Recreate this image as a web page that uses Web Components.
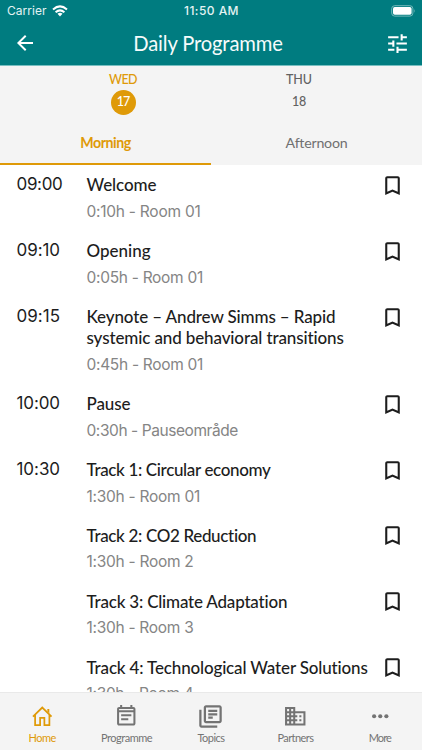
<!DOCTYPE html>
<html lang="en">
<head>
<meta charset="utf-8">
<meta name="viewport" content="width=device-width, initial-scale=1">
<title>Daily Programme</title>
<style>
html,body{margin:0;height:100%;overflow:hidden;background:#fff}
</style>
</head>
<body>
<programme-app></programme-app>
<script>
const define = (name, html, setup) => {
  const template = document.createElement('template');
  template.innerHTML = html;
  customElements.define(name, class extends HTMLElement {
    connectedCallback() {
      if (this.shadowRoot) return;
      this.attachShadow({ mode: 'open' }).append(template.content.cloneNode(true));
      if (setup) setup(this, this.shadowRoot);
    }
  });
};

const icons = {
  back: '<path d="M20 11H7.8l5.6-5.6L12 4l-8 8 8 8 1.4-1.4L7.8 13H20z"/>',
  tune: '<path d="M3 17v2h6v-2H3zM3 5v2h10V5H3zm10 16v-2h8v-2h-8v-2h-2v6h2zM7 9v2H3v2h4v2h2V9H7zm14 4v-2H11v2h10zm-6-4h2V7h4V5h-4V3h-2v6z"/>',
  bookmark: '<path d="M17 3H7c-1.1 0-2 .9-2 2v16l7-3 7 3V5c0-1.1-.9-2-2-2zm0 15-5-2.2L7 18V5h10z"/>',
  home: '<path fill="none" stroke="currentColor" stroke-width="1.7" d="M2.9 12.4 12 3.5l9.1 8.9M5 10.5v10.3h4.9v-7.2h4.2v7.2H19V10.5"/><path d="M17 4.8h1.9v4.3L17 7.3z"/>',
  programme: '<path d="M17 10H7v2h10v-2zm2-7h-1V1h-2v2H8V1H6v2H5c-1.1 0-2 .9-2 2v14c0 1.1.9 2 2 2h14c1.1 0 2-.9 2-2V5c0-1.1-.9-2-2-2zm0 16H5V8h14v11zm0-13H5V5h14v1zm-5 8H7v2h7v-2z"/>',
  topics: '<path d="M4 6H2v14c0 1.1.9 2 2 2h14v-2H4V6zm16-4H8c-1.1 0-2 .9-2 2v12c0 1.1.9 2 2 2h12c1.1 0 2-.9 2-2V4c0-1.1-.9-2-2-2zm0 14H8V4h12v12zM10 9h8v2h-8V9zm0 3h4v2h-4v-2zm0-6h8v2h-8V6z"/>',
  partners: '<path d="M12 7V3H2v18h20V7H12zM6 19H4v-2h2v2zm0-4H4v-2h2v2zm0-4H4V9h2v2zm0-4H4V5h2v2zm4 12H8v-2h2v2zm0-4H8v-2h2v2zm0-4H8V9h2v2zm0-4H8V5h2v2zm10 12h-8v-2h2v-2h-2v-2h2v-2h-2V9h8v10zm-2-8h-2v2h2v-2zm0 4h-2v2h2v-2z"/>',
  more: '<circle cx="6" cy="12" r="2.05"/><circle cx="12" cy="12" r="2.05"/><circle cx="18" cy="12" r="2.05"/>'
};

define('app-icon', `<style>:host{display:block;width:24px;height:24px}svg{display:block;width:100%;height:100%;fill:currentColor}</style><svg viewBox="0 0 24 24"></svg>`,
  (el, root) => { root.querySelector('svg').innerHTML = icons[el.getAttribute('name')]; });

/* A line of text whose tracking is adjusted to a nominal width. */
define('fit-text', `<style>:host{display:block;width:max-content;white-space:nowrap}</style><span><slot></slot></span>`,
  (el, root) => {
    const span = root.querySelector('span');
    const width = span.getBoundingClientRect().width;
    const gap = (Number(el.getAttribute('w')) - width) / el.textContent.length;
    span.style.letterSpacing = gap.toFixed(4) + 'px';
  });

define('status-bar', `<style>
:host{display:grid;grid-template-columns:1fr auto 1fr;align-items:center;height:22px;padding:0 6px 0 7px;font:12px/22px Inter,sans-serif;color:#e4f3f3}
.left{display:flex;align-items:center;gap:5px}.wifi{width:16px;height:12px}.time{font-weight:500}.battery{justify-self:end;width:25px;height:12px}
</style><div class="left"><fit-text w="39.5">Carrier</fit-text><svg class="wifi" viewBox="0 0 16 12" fill="none" stroke="#fff" stroke-width="2"><path d="M1 4.4q7-6 14 0M3.6 7.2q4.4-3.6 8.8 0"/><path fill="#fff" stroke="none" d="M5.5 8.7q2.5-1.8 5 0L8 11.4z"/></svg></div><fit-text class="time" w="55">11:50 AM</fit-text><svg class="battery" viewBox="0 0 25 12"><rect x=".7" y=".7" width="21.2" height="10.4" rx="3" fill="none" stroke="#73b9ba"/><rect x="2" y="2" width="18.6" height="7.8" rx="1.7" fill="#fff"/><path d="M23.2 4q1.4 1.9 0 3.8z" fill="#73b9ba"/></svg>`);

define('title-bar', `<style>
:host{display:grid;grid-template-columns:40px 1fr 47px;align-items:center;height:42px;padding:0 12px 0 13px;color:#fff}
.title{justify-self:center;font:20.2px/42px Lato,sans-serif;color:#f5fbfb}.tune{width:25px;height:25px;justify-self:end}
</style><app-icon name="back"></app-icon><fit-text class="title" w="149.5">Daily Programme</fit-text><app-icon class="tune" name="tune"></app-icon>`);

define('day-tab', `<style>
:host{display:flex;flex-direction:column;align-items:center;width:60px;color:#626262;font:12.5px/16px Lato,sans-serif;padding-top:6px;box-sizing:border-box}
.number{display:grid;place-items:center;width:25px;height:25px;border-radius:50%;margin-top:1.5px}
:host([active]){color:#df9a08}:host([active]) .number{background:#df9a08;color:#fff}
.number,.name{font-weight:500}
</style><div class="name"><slot name="name"></slot></div><div class="number"><slot></slot></div>`);

define('period-tab', `<style>
:host{display:flex;justify-content:center;box-sizing:border-box;height:43px;padding-top:2px;font:14.2px/38px Lato,sans-serif;color:#707070}
:host([active]){color:#df9a08;font-weight:700;border-bottom:2px solid #df9a08}
</style><slot></slot>`);

define('date-header', `<style>
:host{display:block;height:100px;box-sizing:border-box;background:#f4f4f4;border-top:1px solid #78bfc1}.days{display:flex;gap:116px;height:56px;padding-left:93px}.periods{display:grid;grid-template-columns:1fr 1fr}
</style><div class="days"><day-tab active><fit-text slot="name" w="28">WED</fit-text><fit-text w="12.5">17</fit-text></day-tab><day-tab><fit-text slot="name" w="26">THU</fit-text><fit-text w="14">18</fit-text></day-tab></div><div class="periods"><period-tab active><fit-text w="50.5">Morning</fit-text></period-tab><period-tab><fit-text w="61.5">Afternoon</fit-text></period-tab></div>`);

define('session-row', `<style>
:host{display:grid;grid-template-columns:70px 1fr 25px;padding:9.3px 17px 9.1px 16.5px;color:#1d1d1d}
.time{font:17px/21px Inter,sans-serif;padding-top:.2px}.title{font:500 17px/21.2px Lato,sans-serif}.meta{font:15.5px/20px Inter,sans-serif;color:#858585;margin-top:6.3px;height:20px}.mark{width:25px;height:25px;margin-top:-1.5px}
</style><div class="time"><slot name="time"></slot></div><div><div class="title"><slot></slot></div><div class="meta"><slot name="meta"></slot></div></div><app-icon class="mark" name="bookmark"></app-icon>`);

const sessions = [
  ['09:00', 46, [['Welcome', 70]], '0:10h - Room 01', 114],
  ['09:10', 43.5, [['Opening', 64]], '0:05h - Room 01', 116.5],
  ['09:15', 43.5, [['Keynote – Andrew Simms – Rapid', 249], ['systemic and behavioral transitions', 257.5]], '0:45h - Room 01', 116.5],
  ['10:00', 43.5, [['Pause', 44]], '0:30h - Pauseområde', 151.5],
  ['10:30', 43.5, [['Track 1: Circular economy', 184]], '1:30h - Room 01', 113.5],
  ['', 0, [['Track 2: CO2 Reduction', 170]], '1:30h - Room 2', 107],
  ['', 0, [['Track 3: Climate Adaptation', 201]], '1:30h - Room 3', 107],
  ['', 0, [['Track 4: Technological Water Solutions', 281.5]], '1:30h - Room 4', 107]
];

define('session-list', `<style>:host{display:block;min-height:0;overflow:hidden;background:#fff}</style>`,
  (el, root) => {
    root.innerHTML += sessions.map(([time, tw, lines, meta, mw]) => `<session-row>${time ? `<fit-text slot="time" w="${tw}">${time}</fit-text>` : ''}${lines.map(([t, w]) => `<fit-text w="${w}">${t}</fit-text>`).join('')}<fit-text slot="meta" w="${mw}">${meta}</fit-text></session-row>`).join('');
  });

define('nav-item', `<style>
:host{display:flex;flex-direction:column;align-items:center;color:#737373;font:11px/14px Lato,sans-serif;padding-top:11px}
:host([active]){color:#df9a08}app-icon{width:24.5px;height:24.5px;margin-bottom:2px}
:host([icon=topics]) app-icon{width:27px;height:27px;margin:-1.5px 0 1px}
</style><app-icon></app-icon><slot></slot>`,
  (el, root) => {
    const icon = document.createElement('app-icon');
    icon.setAttribute('name', el.getAttribute('icon'));
    root.querySelector('app-icon').replaceWith(icon);
  });

define('nav-bar', `<style>
:host{display:grid;grid-template-columns:repeat(5,1fr);height:58px;box-sizing:border-box;background:#f4f4f4;border-top:1px solid #e9e9e9}
</style><nav-item active icon="home"><fit-text w="27.5">Home</fit-text></nav-item><nav-item icon="programme"><fit-text w="51">Programme</fit-text></nav-item><nav-item icon="topics"><fit-text w="27">Topics</fit-text></nav-item><nav-item icon="partners"><fit-text w="36">Partners</fit-text></nav-item><nav-item icon="more"><fit-text w="22">More</fit-text></nav-item>`);

define('programme-app', `<style>
:host{display:grid;grid-template-rows:65px 100px minmax(0,1fr) 58px;width:422px;height:750px;overflow:hidden}
header{background:#007c80}
</style><header><status-bar></status-bar><title-bar></title-bar></header><date-header></date-header><session-list></session-list><nav-bar></nav-bar>`);
</script>
</body>
</html>
